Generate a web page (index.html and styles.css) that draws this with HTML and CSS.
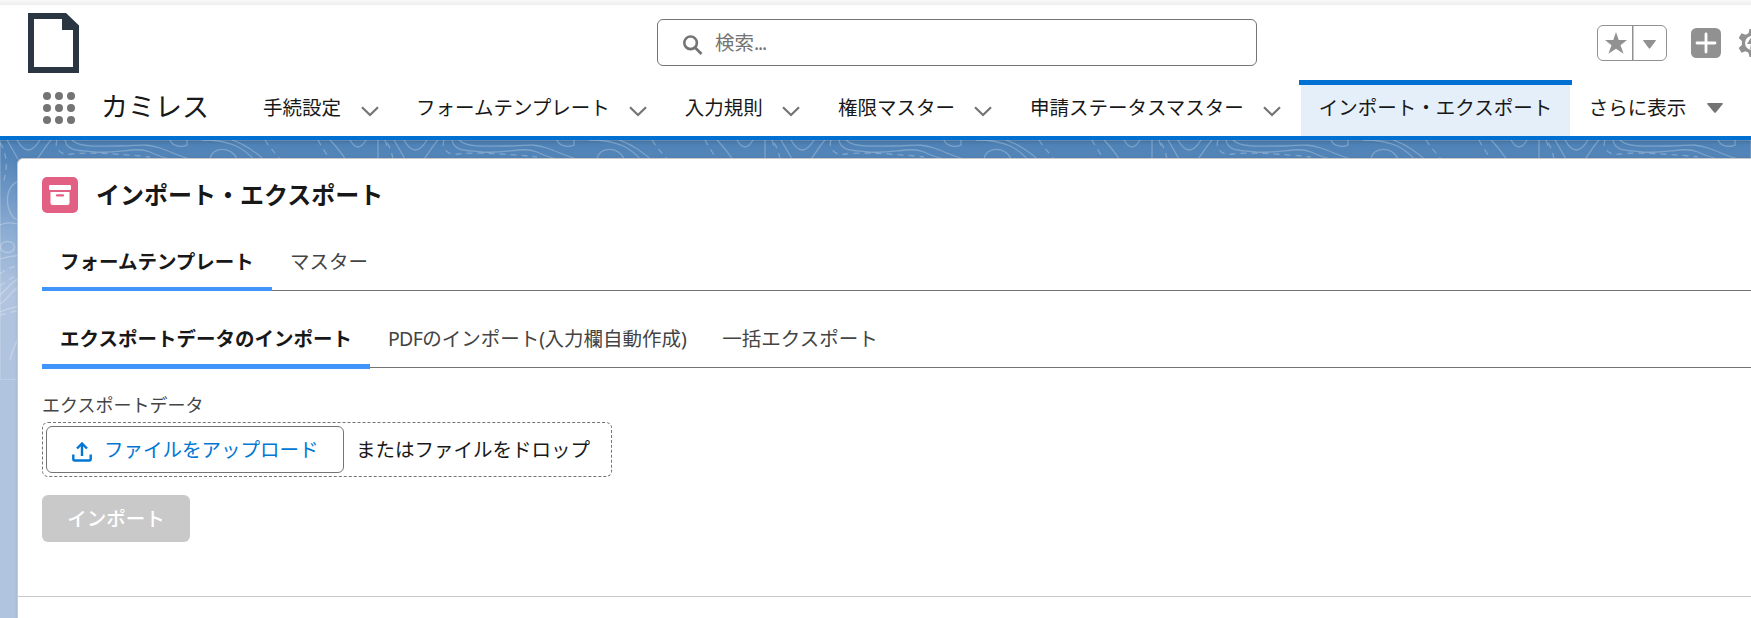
FILE: index.html
```html
<!DOCTYPE html>
<html lang="ja">
<head>
<meta charset="utf-8">
<title>インポート・エクスポート</title>
<link rel="stylesheet" href="styles.css">
</head>
<body>
<div class="top-shade"></div>
<header class="header">
  <svg class="logo" viewBox="0 0 51 60"><path fill="#2a3642" fill-rule="evenodd" d="M0 0H38L51 12.500V60H0ZM6 6V54H45V17H34V6Z"/></svg>
  <div class="search">
    <svg class="search-icon" viewBox="0 0 20 20"><circle cx="7.600" cy="7.800" r="6.300"/><path d="M12 12.500L18.500 19"/></svg>
    <span>検索<span class="dots">...</span></span>
  </div>
  <div class="tools">
    <div class="favorites">
      <svg class="fav-star" viewBox="0 0 22 22"><path d="M11 0L13.700 8.100H22L15.500 13.200L18.600 21.800L11 16.700L3.400 21.800L6.500 13.200L0 8.100H8.300Z"/></svg>
      <svg class="fav-caret" viewBox="0 0 13 9"><path d="M0.500 0H12.500Q13.300 0.200 12.600 1L7.200 8.300Q6.500 9 5.800 8.300L0.400 1Q-.3.200.5 0Z"/></svg>
    </div>
    <svg class="add" viewBox="0 0 30 30"><rect width="30" height="30" rx="5.500" fill="#919191"/><path d="M15 6V24M6 15H24" stroke="#fff" stroke-width="2.800" stroke-linecap="round"/></svg>
    <svg class="gear" viewBox="0 0 28 28"><path fill="#919191" d="M11.500 0h5l1 4.200 3 1.600 4-1.500 2.800 4.700-3.200 3v4l3.200 3-2.800 4.700-4-1.500-3 1.600-1 4.200h-5l-1-4.200-3-1.600-4 1.500L.7 19l3.200-3v-4L.7 9l2.800-4.700 4 1.500 3-1.600z"/><circle cx="14" cy="14" r="7" fill="#fff"/><path fill="#919191" d="M14 7L9 15H13L12 21L19 12H14.500L17 7Z"/></svg>
  </div>
</header>
<nav class="nav">
  <svg class="waffle" viewBox="0 0 32 32"><circle cx="4" cy="4" r="4"/><circle cx="16" cy="4" r="4"/><circle cx="28" cy="4" r="4"/><circle cx="4" cy="16" r="4"/><circle cx="16" cy="16" r="4"/><circle cx="28" cy="16" r="4"/><circle cx="4" cy="28" r="4"/><circle cx="16" cy="28" r="4"/><circle cx="28" cy="28" r="4"/></svg>
  <span class="app-name">カミレス</span>
  <a class="nav-item">手続設定<svg class="chevron" viewBox="0 0 18 11"><path d="M1 1.200L9 9L17 1.200"/></svg></a>
  <a class="nav-item">フォームテンプレート<svg class="chevron" viewBox="0 0 18 11"><path d="M1 1.200L9 9L17 1.200"/></svg></a>
  <a class="nav-item">入力規則<svg class="chevron" viewBox="0 0 18 11"><path d="M1 1.200L9 9L17 1.200"/></svg></a>
  <a class="nav-item">権限マスター<svg class="chevron" viewBox="0 0 18 11"><path d="M1 1.200L9 9L17 1.200"/></svg></a>
  <a class="nav-item">申請ステータスマスター<svg class="chevron" viewBox="0 0 18 11"><path d="M1 1.200L9 9L17 1.200"/></svg></a>
  <a class="nav-item active">インポート・エクスポート</a>
  <a class="nav-more">さらに表示<svg class="more-caret" viewBox="0 0 16 10"><path d="M.8 0H15.200Q16.300.2 15.600 1.200L9 9.200Q8 10.300 7 9.200L.4 1.200Q-.3.200.8 0Z"/></svg></a>
</nav>
<main class="stage">
  <svg class="topo" width="1751" height="240">
    <defs>
      <pattern id="contours" width="387" height="478" patternUnits="userSpaceOnUse">
        <path d="M7 0L18 19M51 0C44 8 40 16 36 20M17 0Q28 20 40 0M65 0C67 12 80 10 95 12C120 14 135 6 150 12C165 19 175 21 197 21M72 0C80 8 100 6 120 6S145 3 160 8S185 20 205 22M170 0C172 6 182 8 187 5V0M210 20C211 6 232 6 237 19M202 0C232 0 244 8 256 22M232 0C244 4 258 14 267 22M330 0C338 8 342 14 346 20M350 0Q358 14 366 0M378 0V20"/>
        <path stroke-dasharray="6 5" d="M57 0C54 8 60 16 72 14S125 14 150 17M265 0C270 8 275 13 281 20M318 0C322 8 328 16 333 24M385 0L387 6M0 3C8 14 8 34 2 44M0 134Q10 126 26 124M0 146Q12 136 26 132M0 175L20 170"/>
        <path d="M30 42C6 34 2 66 14 78L28 86M0 85Q10 80 25 87M0 119Q10 116 25 115M0 155C10 146 14 138 30 134M0 164C10 158 12 146 30 142M0 172Q12 166 30 166M10 220Q14 202 25 190"/>
        <ellipse cx="7.500" cy="107" rx="7" ry="5.500"/>
      </pattern>
    </defs>
    <rect width="1751" height="240" fill="url(#contours)"/>
  </svg>
  <section class="card">
    <div class="card-title">
      <svg class="title-icon" viewBox="0 0 36 36"><rect width="36" height="36" rx="5" fill="#e16084"/><rect x="7" y="8" width="22" height="5" rx="1.200" fill="#fff"/><path fill="#fff" fill-rule="evenodd" d="M8.500 15H27.500V26Q27.500 28 25.500 28H10.500Q8.500 28 8.500 26ZM15 17.300a1.100 1.100 0 0 0 0 2.200H21a1.100 1.100 0 0 0 0-2.200Z"/></svg>
      <h1>インポート・エクスポート</h1>
    </div>
    <div class="tabs tabs-main">
      <span class="tab selected">フォームテンプレート</span>
      <span class="tab">マスター</span>
    </div>
    <div class="tabs tabs-sub">
      <span class="tab selected">エクスポートデータのインポート</span>
      <span class="tab"><span class="latin">PDF</span>のインポート<span class="latin">(</span>入力欄自動作成<span class="latin">)</span></span>
      <span class="tab">一括エクスポート</span>
    </div>
    <div class="label">エクスポートデータ</div>
    <div class="dropzone">
      <span class="upload"><svg class="upload-icon" viewBox="0 0 20 20"><path d="M1.300 12.500V17Q1.300 18.500 2.800 18.500H17.200Q18.700 18.500 18.700 17V12.500M10 14V2M5 6.500L10 1.500L15 6.500"/></svg>ファイルをアップロード</span>
      <span class="drop-text">またはファイルをドロップ</span>
    </div>
    <button class="import" disabled>インポート</button>
    <div class="card-footer"></div>
  </section>
</main>
</body>
</html>
```
FILE: styles.css
```css
* { box-sizing: border-box; }
body {
  margin: 0;
  width: 1751px;
  height: 618px;
  overflow: hidden;
  background: #fff;
  color: #181818;
  font: 19.5px/28px "Noto Sans", "Noto Sans CJK JP", sans-serif;
}
svg { display: block; flex: none; }
.top-shade { height: 5px; background: linear-gradient(#f8f8f8, #eee); }
.header { height: 75px; display: flex; align-items: flex-start; padding-left: 28px; }
.logo { width: 51px; height: 60px; margin-top: 8px; }
.search {
  flex: none;
  width: 600px; height: 47px; margin: 14px 0 0 578px;
  border: 1px solid #747474; border-radius: 6px;
  display: flex; align-items: center; color: #747474;
  padding-left: 25px; gap: 12px;
}
.dots { letter-spacing: -1.2px; }
.search-icon { width: 20px; height: 20px; margin-top: 4px; fill: none; stroke: #747474; stroke-width: 2.6; }
.tools { flex: none; display: flex; align-items: center; margin: 20px 0 0 340px; height: 36px; }
.favorites { width: 70px; height: 36px; border: 1px solid #919191; border-radius: 6px; display: grid; grid-template-columns: 35px 1fr; align-items: center; justify-items: center; fill: #919191; background: linear-gradient(#919191, #919191) 34px 0 / 1.5px 100% no-repeat; }
.fav-star { width: 22px; height: 22px; }
.fav-caret { width: 13px; height: 9px; margin-top: 3px; }
.add { width: 30px; height: 30px; margin-left: 24px; }
.gear { width: 28px; height: 28px; margin-left: 17px; }
.nav { height: 60px; display: flex; border-bottom: 4px solid #0070d2; padding-left: 43px; white-space: nowrap; }
.waffle { width: 32px; height: 32px; margin-top: 12px; fill: #747474; }
.app-name { width: 108px; margin: 13px 54px 0 26px; font-size: 27px; }
.nav-item { display: flex; align-items: flex-start; padding-top: 14px; margin-right: 37.5px; }
.chevron { width: 18px; height: 11px; margin: 12px 0 0 19.5px; fill: none; stroke: #747474; stroke-width: 2.2; }
.nav .active { position: relative; width: 269px; margin: 0 19px 0 -18px; padding-left: 18px; background: #e5effa; }
.active::before { content: ""; position: absolute; left: -2px; right: -2px; top: 0; height: 5px; background: #0070d2; }
.nav-more { display: flex; padding-top: 14px; }
.more-caret { width: 16px; height: 10px; margin: 9px 0 0 21px; fill: #747474; }
.stage { position: relative; height: 478px; overflow: hidden; padding: 18px 0 0 17px; background: linear-gradient(#4d82b6 0, #5485b9 18px, #8eaed4 95px, #b0c4df 150px); }
.stage::before { content: ""; position: absolute; inset: 0 0 auto; height: 5px; background: linear-gradient(#00000022, #0000); }
.topo { position: absolute; left: 0; top: 0; fill: none; stroke: #fff; stroke-opacity: .25; stroke-width: 1.3; }
.card { position: relative; height: 480px; padding: 18px 0 0 24px; border: 1px solid #c9c9c9; border-width: 1px 0 0 1px; border-radius: 6px 0 0 0; background: #fff; box-shadow: 0 0 3px #0000001c; }
.card-title { display: flex; height: 36px; align-items: center; gap: 18px; }
.card-title h1 { margin: 0; font-size: 24px; line-height: 36px; }
.title-icon { width: 36px; height: 36px; }
.tabs { display: flex; border-bottom: 1px solid #747474; color: #444; }
.tab { padding: 0 18px; height: 48px; line-height: 38px; margin-bottom: -1px; white-space: nowrap; }
.latin { letter-spacing: -.6px; }
.selected { font-weight: 700; color: #181818; }
.tabs-main { margin-top: 30px; height: 48px; }
.tabs-main .selected { width: 230px; border-bottom: 4px solid #4095fb; }
.tabs-sub { margin-top: 29px; height: 48px; }
.tabs-sub .selected { height: 49px; margin-bottom: -2px; border-bottom: 5px solid #4095fb; }
.label { margin-top: 24px; font-size: 18px; line-height: 26px; color: #444; }
.dropzone { width: 570px; height: 55px; margin-top: 4px; border: 1px dashed #747474; border-radius: 6px; display: flex; align-items: center; padding-left: 3px; }
.upload { width: 298px; height: 47px; border: 1px solid #747474; border-radius: 6px; display: flex; align-items: center; padding-left: 25px; gap: 12px; color: #0176d3; }
.upload-icon { width: 20px; height: 20px; margin-top: 5px; fill: none; stroke: #0176d3; stroke-width: 2.4; }
.drop-text { margin-left: 12px; }
.import { display: block; width: 148px; height: 47px; margin-top: 18px; padding: 0; border: 0; border-radius: 6px; background: #c9c9c9; color: #fff; font: inherit; font-weight: 500; }
.card-footer { margin: 54px 0 0 -24px; border-top: 1px solid #c9c9c9; }
```
